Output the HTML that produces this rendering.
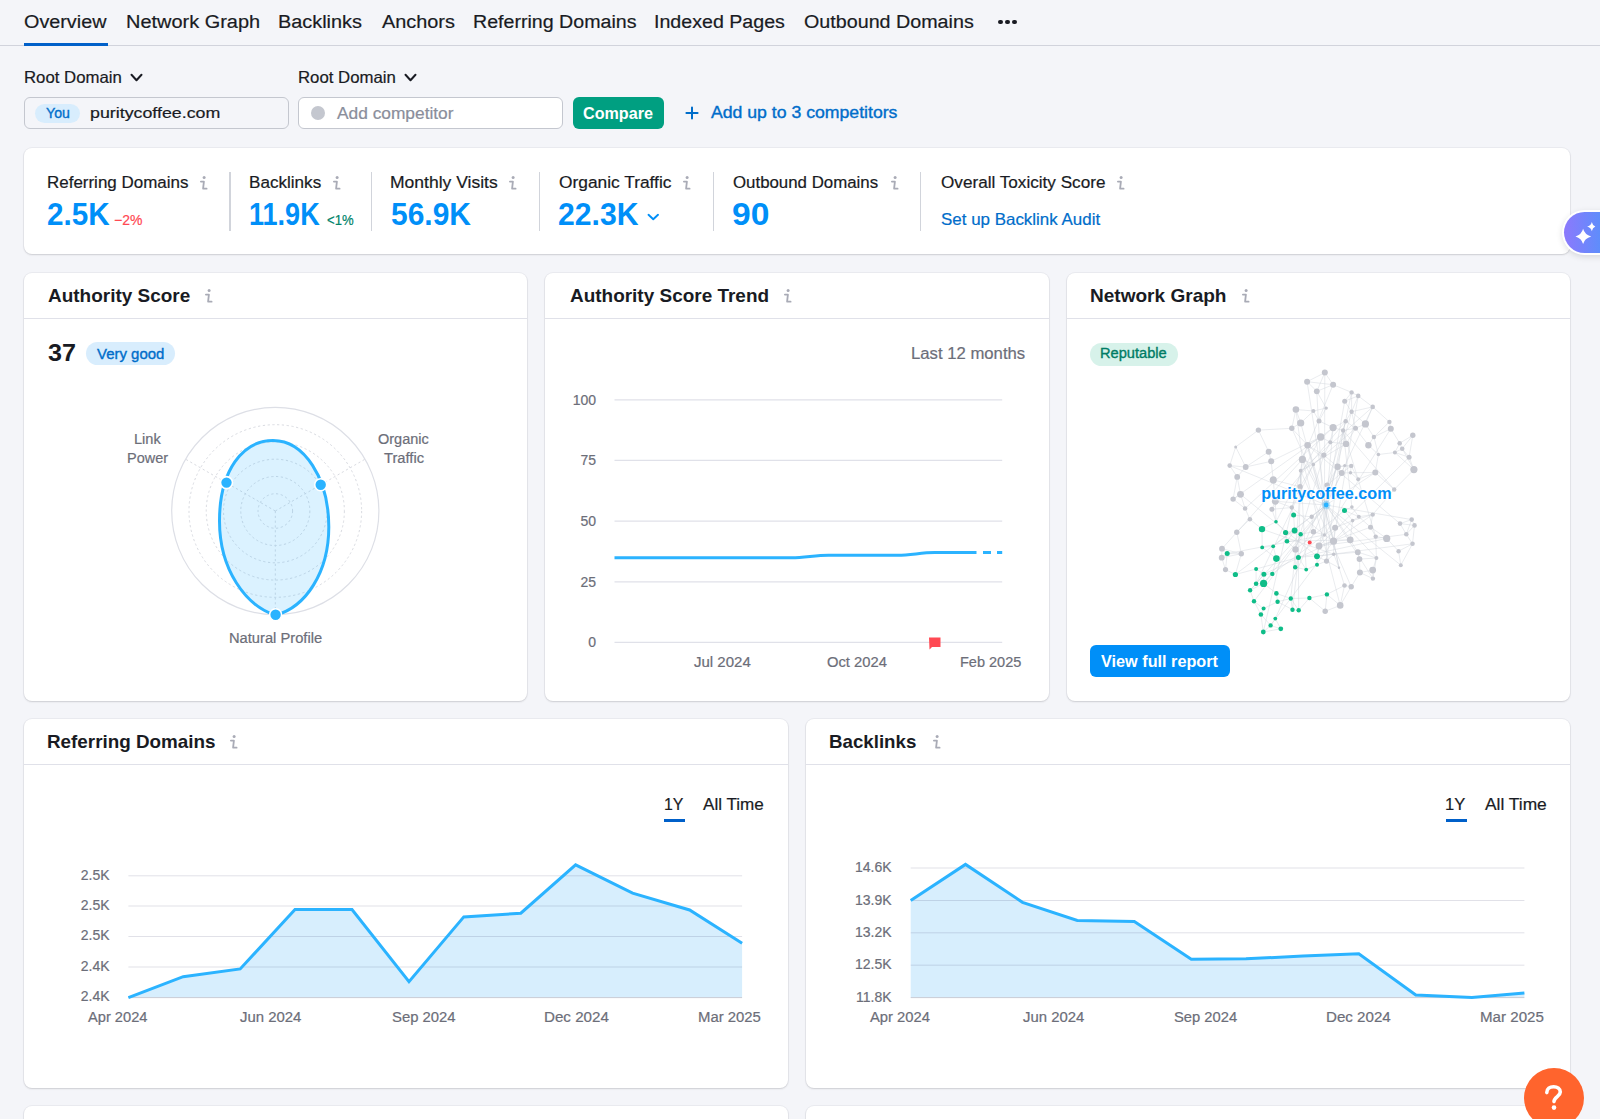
<!DOCTYPE html>
<html><head><meta charset="utf-8"><title>Backlink Analytics Overview</title>
<style>
html,body{margin:0;padding:0;}
body{width:1600px;height:1119px;overflow:hidden;background:#f4f5f9;position:relative;font-family:"Liberation Sans",sans-serif;}
.t{position:absolute;white-space:nowrap;}
.ln,.box,.ic,.card{position:absolute;}
.box{box-sizing:border-box;border-radius:6px;}
.card{background:#fff;border-radius:8px;box-shadow:0 0 0 1px rgba(25,27,35,.045),0 1px 2px rgba(25,27,35,.14);}
svg.full{position:absolute;left:0;top:0;width:1600px;height:1119px;overflow:visible;pointer-events:none;}
</style></head><body>
<div class="ln" style="left:0px;top:45px;width:1600px;height:1px;background:#d1d3dc"></div>
<div class="ln" style="left:24px;top:43px;width:84px;height:3px;background:#0060c9"></div>
<div class="ln" style="left:998.45px;top:19.6px;width:4.6px;height:4.6px;border-radius:2.3px;background:#191b23"></div>
<div class="ln" style="left:1005.325px;top:19.6px;width:4.6px;height:4.6px;border-radius:2.3px;background:#191b23"></div>
<div class="ln" style="left:1012.2px;top:19.6px;width:4.6px;height:4.6px;border-radius:2.3px;background:#191b23"></div>
<svg class="ic" style="left:129.5px;top:73px" width="13" height="9" viewBox="-1 -1 13 9"><path d="M0.5 0.8L5.5 6.2L10.5 0.8" fill="none" stroke="#191b23" stroke-width="2" stroke-linecap="round" stroke-linejoin="round"/></svg>
<svg class="ic" style="left:403.5px;top:73px" width="13" height="9" viewBox="-1 -1 13 9"><path d="M0.5 0.8L5.5 6.2L10.5 0.8" fill="none" stroke="#191b23" stroke-width="2" stroke-linecap="round" stroke-linejoin="round"/></svg>
<div class="box" style="left:24px;top:97px;width:265px;height:32px;background:#f4f5f9;border:1px solid #c4c7cf;"></div>
<div class="box" style="left:35px;top:104px;width:45px;height:19px;background:#d8edfd;border-radius:10px"></div>
<div class="box" style="left:298px;top:97px;width:265px;height:32px;background:#fff;border:1px solid #c4c7cf;"></div>
<div class="box" style="left:311px;top:106px;width:14px;height:14px;border-radius:7px;background:#c4c7cf"></div>
<div class="box" style="left:573px;top:97px;width:91px;height:32px;background:#009f81;border-radius:6px"></div>
<svg class="ic" style="left:684.6px;top:106.25px" width="14" height="14" viewBox="0 0 14 14"><path d="M7 1.4V12.6M1.4 7H12.6" stroke="#006dca" stroke-width="2" stroke-linecap="round"/></svg>
<div class="card" style="left:24px;top:148px;width:1546px;height:106px;"></div>
<div class="ln" style="left:229.4px;top:172px;width:1.2px;height:59px;background:#d1d4db"></div>
<div class="ln" style="left:371px;top:172px;width:1.2px;height:59px;background:#d1d4db"></div>
<div class="ln" style="left:538.7px;top:172px;width:1.2px;height:59px;background:#d1d4db"></div>
<div class="ln" style="left:712.6px;top:172px;width:1.2px;height:59px;background:#d1d4db"></div>
<div class="ln" style="left:920.1px;top:172px;width:1.2px;height:59px;background:#d1d4db"></div>
<svg class="ic" style="left:199.5px;top:175.8px" width="9" height="15" viewBox="0 0 9 15"><circle cx="4.1" cy="1.6" r="1.5" fill="#a9abb6"/><path d="M0.9 5.6H3.9L3.1 12.7H6.6" fill="none" stroke="#a9abb6" stroke-width="1.8" stroke-linecap="round" stroke-linejoin="round"/></svg>
<svg class="ic" style="left:332.6px;top:175.8px" width="9" height="15" viewBox="0 0 9 15"><circle cx="4.1" cy="1.6" r="1.5" fill="#a9abb6"/><path d="M0.9 5.6H3.9L3.1 12.7H6.6" fill="none" stroke="#a9abb6" stroke-width="1.8" stroke-linecap="round" stroke-linejoin="round"/></svg>
<svg class="ic" style="left:508.5px;top:175.8px" width="9" height="15" viewBox="0 0 9 15"><circle cx="4.1" cy="1.6" r="1.5" fill="#a9abb6"/><path d="M0.9 5.6H3.9L3.1 12.7H6.6" fill="none" stroke="#a9abb6" stroke-width="1.8" stroke-linecap="round" stroke-linejoin="round"/></svg>
<svg class="ic" style="left:683px;top:175.8px" width="9" height="15" viewBox="0 0 9 15"><circle cx="4.1" cy="1.6" r="1.5" fill="#a9abb6"/><path d="M0.9 5.6H3.9L3.1 12.7H6.6" fill="none" stroke="#a9abb6" stroke-width="1.8" stroke-linecap="round" stroke-linejoin="round"/></svg>
<svg class="ic" style="left:890.7px;top:175.8px" width="9" height="15" viewBox="0 0 9 15"><circle cx="4.1" cy="1.6" r="1.5" fill="#a9abb6"/><path d="M0.9 5.6H3.9L3.1 12.7H6.6" fill="none" stroke="#a9abb6" stroke-width="1.8" stroke-linecap="round" stroke-linejoin="round"/></svg>
<svg class="ic" style="left:1117px;top:175.8px" width="9" height="15" viewBox="0 0 9 15"><circle cx="4.1" cy="1.6" r="1.5" fill="#a9abb6"/><path d="M0.9 5.6H3.9L3.1 12.7H6.6" fill="none" stroke="#a9abb6" stroke-width="1.8" stroke-linecap="round" stroke-linejoin="round"/></svg>
<svg class="ic" style="left:646.6px;top:212.6px" width="12.5" height="8" viewBox="-1 -1 12.5 8"><path d="M0.5 0.8L5.25 5.2L10.0 0.8" fill="none" stroke="#008ff8" stroke-width="1.9" stroke-linecap="round" stroke-linejoin="round"/></svg>
<div class="card" style="left:24px;top:273px;width:503px;height:428px;"></div>
<div class="ln" style="left:24px;top:318px;width:503px;height:1px;background:#e0e1e9"></div>
<div class="card" style="left:545px;top:273px;width:504px;height:428px;"></div>
<div class="ln" style="left:545px;top:318px;width:504px;height:1px;background:#e0e1e9"></div>
<div class="card" style="left:1067px;top:273px;width:503px;height:428px;"></div>
<div class="ln" style="left:1067px;top:318px;width:503px;height:1px;background:#e0e1e9"></div>
<svg class="ic" style="left:205.4px;top:288.5px" width="9" height="15" viewBox="0 0 9 15"><circle cx="4.1" cy="1.6" r="1.5" fill="#a9abb6"/><path d="M0.9 5.6H3.9L3.1 12.7H6.6" fill="none" stroke="#a9abb6" stroke-width="1.8" stroke-linecap="round" stroke-linejoin="round"/></svg>
<svg class="ic" style="left:783.7px;top:288.5px" width="9" height="15" viewBox="0 0 9 15"><circle cx="4.1" cy="1.6" r="1.5" fill="#a9abb6"/><path d="M0.9 5.6H3.9L3.1 12.7H6.6" fill="none" stroke="#a9abb6" stroke-width="1.8" stroke-linecap="round" stroke-linejoin="round"/></svg>
<svg class="ic" style="left:1242px;top:288.5px" width="9" height="15" viewBox="0 0 9 15"><circle cx="4.1" cy="1.6" r="1.5" fill="#a9abb6"/><path d="M0.9 5.6H3.9L3.1 12.7H6.6" fill="none" stroke="#a9abb6" stroke-width="1.8" stroke-linecap="round" stroke-linejoin="round"/></svg>
<div class="box" style="left:86px;top:342px;width:88.5px;height:23px;background:#d8edfd;border-radius:12px"></div>
<div class="box" style="left:1090px;top:342.5px;width:88px;height:23px;background:#d7f2ea;border-radius:12px"></div>
<svg class="full"><circle cx="275.3" cy="511" r="103.6" fill="none" stroke="#dddfe6" stroke-width="1.2"/><circle cx="275.3" cy="511" r="17.27" fill="none" stroke="#d9dbe1" stroke-width="1" stroke-dasharray="2.2 2.6"/><circle cx="275.3" cy="511" r="34.53" fill="none" stroke="#d9dbe1" stroke-width="1" stroke-dasharray="2.2 2.6"/><circle cx="275.3" cy="511" r="51.80" fill="none" stroke="#d9dbe1" stroke-width="1" stroke-dasharray="2.2 2.6"/><circle cx="275.3" cy="511" r="69.07" fill="none" stroke="#d9dbe1" stroke-width="1" stroke-dasharray="2.2 2.6"/><circle cx="275.3" cy="511" r="86.33" fill="none" stroke="#d9dbe1" stroke-width="1" stroke-dasharray="2.2 2.6"/><line x1="275.3" y1="511" x2="275.30" y2="614.60" stroke="#d9dbe1" stroke-width="1" stroke-dasharray="2.2 2.6"/><line x1="275.3" y1="511" x2="185.58" y2="459.20" stroke="#d9dbe1" stroke-width="1" stroke-dasharray="2.2 2.6"/><line x1="275.3" y1="511" x2="365.02" y2="459.20" stroke="#d9dbe1" stroke-width="1" stroke-dasharray="2.2 2.6"/><path d="M275.6,615.2 C246,606 219.5,570 219.5,521 C219.5,470 243,440.5 273,440.5 C304,440.5 328.8,478 328.8,527 C328.8,572 306,607 275.6,615.2 Z" fill="#2bb3ff" fill-opacity="0.17" stroke="#2bb3ff" stroke-width="3"/><circle cx="226.5" cy="482.6" r="6" fill="#2bb3ff" stroke="#fff" stroke-width="1.6"/><circle cx="320.7" cy="484.8" r="6" fill="#2bb3ff" stroke="#fff" stroke-width="1.6"/><circle cx="275.6" cy="614.8" r="6" fill="#2bb3ff" stroke="#fff" stroke-width="1.6"/></svg>
<svg class="full"><line x1="614.5" x2="1002.2" y1="399.8" y2="399.8" stroke="#e0e1e9" stroke-width="1.2"/><line x1="614.5" x2="1002.2" y1="460.3" y2="460.3" stroke="#e0e1e9" stroke-width="1.2"/><line x1="614.5" x2="1002.2" y1="521.1" y2="521.1" stroke="#e0e1e9" stroke-width="1.2"/><line x1="614.5" x2="1002.2" y1="581.9" y2="581.9" stroke="#e0e1e9" stroke-width="1.2"/><line x1="614.5" x2="1002.2" y1="642.4" y2="642.4" stroke="#e0e1e9" stroke-width="1.2"/><path d="M614.5,557.8 L791.5,557.8 C805,557.8 815,555.2 828.5,555.2 L897.7,555.2 C911,555.2 921,552.6 934.7,552.6 L976.5,552.6" fill="none" stroke="#2bb3ff" stroke-width="3"/><path d="M983,552.6 L991,552.6 M997,552.6 L1002.2,552.6" fill="none" stroke="#2bb3ff" stroke-width="3"/><path d="M929,637.5 H940.5 V647 H932 L929.5,649.5 Z" fill="#ff4953"/></svg>
<svg class="full"><path d="M1350.5 472.7L1358.2 479.3M1352.6 520.6L1333.5 541.2M1320.7 437.0L1276.0 521.7M1313.4 411.0L1326.2 408.1M1229.7 465.6L1245.7 467.0M1229.7 465.6L1237.2 476.9M1344.5 585.5L1351.2 586.8M1254.0 601.3L1326.2 505.0M1373.9 437.0L1378.4 454.5M1277.6 601.7L1263.6 608.6M1258.4 430.1L1235.7 446.9M1276.0 521.7L1262.0 529.1M1295.5 549.4L1298.4 557.4M1325.2 611.3L1326.9 594.4M1409.1 457.2L1319.0 546.0M1295.9 409.5L1300.7 423.0M1350.5 472.7L1375.3 472.5M1365.4 423.9L1373.9 437.0M1295.9 409.5L1291.8 428.3M1333.7 554.2L1339.0 567.7M1249.9 519.2L1262.0 529.1M1386.7 538.4L1398.6 551.2M1280.8 628.8L1263.3 632.0M1254.0 601.3L1260.9 614.5M1273.2 546.3L1326.2 505.0M1406.3 534.3L1412.5 543.8M1300.7 423.0L1333.5 541.2M1345.7 421.2L1355.5 428.3M1337.6 466.8L1327.1 485.1M1295.5 549.4L1287.0 541.2M1262.0 529.1L1262.2 547.4M1324.4 535.0L1272.3 573.9M1375.3 472.5L1358.2 479.3M1236.8 532.2L1222.0 548.7M1256.1 569.0L1263.9 574.2M1414.5 525.4L1412.5 543.8M1390.8 428.7L1324.4 535.0M1225.5 569.6L1227.2 553.6M1300.7 470.7L1300.1 486.8M1313.4 531.7L1300.7 534.3M1372.7 514.6L1370.5 527.2M1324.4 535.0L1319.0 546.0M1276.4 593.4L1290.8 598.5M1302.4 459.4L1295.5 549.4M1291.8 428.3L1258.4 430.1M1237.2 476.9L1233.1 499.1M1302.4 459.4L1340.2 605.4M1358.2 395.9L1333.5 541.2M1326.9 594.4L1309.4 598.0M1412.5 543.8L1317.0 556.3M1375.3 472.5L1326.2 505.0M1323.8 455.1L1295.5 549.4M1316.8 391.3L1326.2 408.1M1337.6 466.8L1351.2 465.9M1345.7 421.2L1343.1 430.4M1295.5 549.4L1300.7 534.3M1351.9 507.1L1344.5 510.5M1250.1 590.3L1326.2 505.0M1351.6 411.7L1326.2 505.0M1344.7 401.2L1351.6 411.7M1271.9 509.3L1291.8 507.5M1350.2 539.8L1326.2 505.0M1256.1 569.0L1235.4 574.5M1323.8 455.1L1337.6 466.8M1333.1 384.7L1316.8 391.3M1307.6 445.2L1326.2 505.0M1229.7 465.6L1326.2 505.0M1225.5 569.6L1235.4 574.5M1298.4 557.4L1295.2 567.3M1333.1 427.6L1320.7 437.0M1240.5 494.3L1245.1 508.5M1268.7 451.7L1271.2 461.3M1249.9 519.2L1236.8 532.2M1241.3 553.8L1227.2 553.6M1237.2 476.9L1240.5 494.3M1351.2 586.8L1340.2 605.4M1275.3 501.3L1326.2 505.0M1351.6 411.7L1372.7 406.9M1340.2 605.4L1325.2 611.3M1319.0 546.0L1317.0 556.3M1337.6 466.8L1344.7 465.5M1291.8 428.3L1326.2 505.0M1409.1 457.2L1413.9 469.6M1292.5 609.7L1298.7 610.3M1250.1 590.3L1254.0 601.3M1341.7 473.0L1327.1 485.1M1302.4 459.4L1300.7 470.7M1324.4 535.0L1333.5 541.2M1294.6 530.5L1287.0 541.2M1302.4 459.4L1236.8 532.2M1372.7 406.9L1300.7 470.7M1323.8 455.1L1313.4 464.5M1319.0 420.9L1333.1 427.6M1293.6 515.1L1294.6 530.5M1298.4 557.4L1298.7 610.3M1275.3 618.6L1326.2 505.0M1241.3 553.8L1235.4 574.5M1355.5 428.3L1368.4 445.2M1375.7 536.6L1376.4 558.0M1313.4 531.7L1324.4 535.0M1346.1 443.9L1300.7 470.7M1263.9 574.2L1256.1 583.8M1351.2 465.9L1358.2 479.3M1320.7 437.0L1330.3 442.2M1272.3 573.9L1263.6 583.4M1285.6 532.5L1294.6 530.5M1358.8 516.7L1352.6 520.6M1359.9 572.5L1372.9 578.6M1290.8 598.5L1277.6 601.7M1300.7 470.7L1263.3 632.0M1294.6 530.5L1300.7 534.3M1352.6 520.6L1344.5 510.5M1402.2 448.7L1413.9 469.6M1398.6 551.2L1400.8 565.2M1307.6 445.2L1333.5 541.2M1376.4 558.0L1326.2 505.0M1378.4 454.5L1375.3 472.5M1235.4 574.5L1326.2 505.0M1394.2 489.5L1372.7 514.6M1358.2 395.9L1372.7 406.9M1240.5 494.3L1233.1 499.1M1313.4 411.0L1319.0 420.9M1402.2 448.7L1409.1 457.2M1355.5 428.3L1346.1 443.9M1330.3 442.2L1346.1 443.9M1412.5 543.8L1400.8 565.2M1351.6 392.4L1344.7 401.2M1333.5 541.2L1270.6 625.4M1245.1 508.5L1249.9 519.2M1262.2 547.4L1276.4 558.6M1263.9 574.2L1272.3 573.9M1291.8 507.5L1293.6 515.1M1351.9 507.1L1358.8 516.7M1345.7 421.2L1327.1 485.1M1358.2 395.9L1344.7 401.2M1359.9 572.5L1372.7 570.1M1400.0 523.6L1414.5 525.4M1245.7 467.0L1237.2 476.9M1351.6 392.4L1351.6 411.7M1344.7 465.5L1341.7 473.0M1273.2 479.9L1275.3 501.3M1258.4 430.1L1268.7 451.7M1276.4 558.6L1272.3 573.9M1351.2 465.9L1350.5 472.7M1271.2 461.3L1273.2 479.9M1260.9 614.5L1270.6 625.4M1339.0 567.7L1326.2 505.0M1399.7 443.2L1394.9 452.5M1295.9 409.5L1302.4 459.4M1350.2 539.8L1357.8 552.2M1313.4 411.0L1300.7 423.0M1290.8 598.5L1298.7 610.3M1343.1 430.4L1394.2 489.5M1341.7 473.0L1326.2 505.0M1307.6 445.2L1400.0 523.6M1386.7 538.4L1298.4 557.4M1351.6 392.4L1358.2 395.9M1273.2 479.9L1300.1 486.8M1222.0 548.7L1221.7 557.7M1295.5 549.4L1295.2 567.3M1365.4 423.9L1355.5 428.3M1351.6 392.4L1317.0 556.3M1275.3 501.3L1291.8 507.5M1333.7 554.2L1262.0 529.1M1317.0 564.8L1306.2 569.6M1370.5 527.2L1386.7 538.4M1324.4 535.0L1227.2 553.6M1290.8 598.5L1309.4 598.0M1324.8 372.6L1316.8 391.3M1307.6 445.2L1323.8 455.1M1333.5 541.2L1333.7 554.2M1302.4 459.4L1326.2 505.0M1373.9 437.0L1368.4 445.2M1344.7 465.5L1351.2 465.9M1414.5 525.4L1406.3 534.3M1372.7 406.9L1326.2 505.0M1343.1 430.4L1355.5 428.3M1333.7 554.2L1326.5 561.1M1333.1 427.6L1245.1 508.5M1263.6 583.4L1276.4 593.4M1333.5 541.2L1319.0 546.0M1375.3 472.5L1394.2 489.5M1372.7 406.9L1389.4 421.9M1376.4 558.0L1372.9 578.6M1291.8 507.5L1324.4 535.0M1394.9 452.5L1413.9 469.6M1313.4 464.5L1256.1 583.8M1345.7 421.2L1333.1 427.6M1339.0 567.7L1344.5 585.5M1335.1 527.7L1333.5 541.2M1320.7 437.0L1233.1 499.1M1222.0 548.7L1241.3 553.8M1325.2 611.3L1309.4 598.0M1221.7 557.7L1227.2 553.6M1268.7 451.7L1245.7 467.0M1275.3 501.3L1271.9 509.3M1276.4 593.4L1277.6 601.7M1358.8 516.7L1344.5 510.5M1333.5 541.2L1350.2 539.8M1324.8 372.6L1333.1 384.7M1307.6 445.2L1302.4 459.4M1351.6 411.7L1365.4 423.9M1271.9 509.3L1276.0 521.7M1394.9 452.5L1409.1 457.2M1333.1 384.7L1302.4 459.4M1256.1 583.8L1250.1 590.3M1295.5 549.4L1344.5 510.5M1372.7 514.6L1333.5 541.2M1235.7 446.9L1245.7 467.0M1233.1 499.1L1245.1 508.5M1291.8 428.3L1307.6 445.2M1256.1 569.0L1256.1 583.8M1254.0 601.3L1263.6 608.6M1351.6 411.7L1355.5 428.3M1300.1 486.8L1291.8 507.5M1368.4 445.2L1378.4 454.5M1340.2 605.4L1326.9 594.4M1276.0 521.7L1285.6 532.5M1333.1 427.6L1343.1 430.4M1270.6 625.4L1263.3 632.0M1240.5 494.3L1317.0 556.3M1351.6 411.7L1345.7 421.2M1359.5 559.1L1359.9 572.5M1311.7 516.8L1326.2 505.0M1298.4 557.4L1292.5 609.7M1326.5 561.1L1326.2 505.0M1317.0 556.3L1317.0 564.8M1235.7 446.9L1229.7 465.6M1313.4 464.5L1300.7 470.7M1343.1 430.4L1326.5 561.1M1327.1 485.1L1326.2 505.0M1236.8 532.2L1241.3 553.8M1359.5 559.1L1376.4 558.0M1320.7 437.0L1307.6 445.2M1389.4 421.9L1373.9 437.0M1344.7 401.2L1326.2 505.0M1298.4 557.4L1256.1 569.0M1221.7 557.7L1225.5 569.6M1358.8 516.7L1372.7 514.6M1326.2 408.1L1319.0 420.9M1270.6 625.4L1280.8 628.8M1343.1 430.4L1375.7 536.6M1372.7 570.1L1372.9 578.6M1273.2 546.3L1276.4 558.6M1311.7 516.8L1293.6 515.1M1324.8 372.6L1324.4 535.0M1411.7 519.6L1414.5 525.4M1389.4 421.9L1390.8 428.7M1337.6 466.8L1341.7 473.0M1358.2 395.9L1351.6 411.7M1358.8 516.7L1370.5 527.2M1333.1 427.6L1330.3 442.2M1275.3 618.6L1280.8 628.8M1357.8 552.2L1298.4 557.4M1330.3 442.2L1323.8 455.1M1412.8 435.3L1402.2 448.7M1333.1 384.7L1351.6 392.4M1333.1 427.6L1326.2 505.0M1309.4 598.0L1298.7 610.3M1320.7 437.0L1271.2 461.3M1326.5 561.1L1317.0 564.8M1298.4 557.4L1306.2 569.6M1222.0 548.7L1227.2 553.6M1263.6 583.4L1326.2 505.0M1350.2 539.8L1287.0 541.2M1400.0 523.6L1411.7 519.6M1400.0 523.6L1406.3 534.3M1313.4 464.5L1300.1 486.8M1412.5 543.8L1398.6 551.2M1263.6 608.6L1260.9 614.5M1390.8 428.7L1399.7 443.2M1307.1 381.7L1316.8 391.3M1351.2 465.9L1341.7 473.0M1326.5 561.1L1339.0 567.7M1411.7 519.6L1406.3 534.3M1285.6 532.5L1287.0 541.2M1300.7 470.7L1298.4 557.4M1341.7 473.0L1350.5 472.7M1316.8 391.3L1324.4 535.0M1359.9 572.5L1351.2 586.8M1275.3 618.6L1270.6 625.4M1290.8 598.5L1292.5 609.7M1400.8 565.2L1326.2 505.0M1402.2 448.7L1394.9 452.5M1343.1 430.4L1351.9 507.1M1375.7 536.6L1386.7 538.4M1307.1 381.7L1326.2 505.0M1412.8 435.3L1399.7 443.2M1262.2 547.4L1273.2 546.3M1412.8 435.3L1409.1 457.2M1326.5 561.1L1317.0 556.3M1399.7 443.2L1402.2 448.7M1352.6 520.6L1335.1 527.7M1300.7 470.7L1306.2 569.6M1241.3 553.8L1221.7 557.7M1337.6 466.8L1298.4 557.4M1370.5 527.2L1375.7 536.6M1413.9 469.6L1394.2 489.5M1357.8 552.2L1376.4 558.0M1275.3 501.3L1276.0 521.7M1372.9 578.6L1326.2 505.0M1295.2 567.3L1306.2 569.6M1355.5 428.3L1313.4 464.5M1333.5 541.2L1263.9 574.2M1390.8 428.7L1373.9 437.0M1300.7 423.0L1291.8 428.3M1307.1 381.7L1333.1 384.7M1263.9 574.2L1263.6 583.4M1271.2 461.3L1245.7 467.0M1285.6 532.5L1300.7 534.3M1302.4 459.4L1313.4 464.5M1352.6 520.6L1350.2 539.8M1263.6 583.4L1250.1 590.3M1370.5 527.2L1319.0 546.0M1372.7 406.9L1365.4 423.9M1344.5 585.5L1340.2 605.4M1376.4 558.0L1372.7 570.1M1344.5 585.5L1326.9 594.4M1277.6 601.7L1292.5 609.7M1335.1 527.7L1324.4 535.0M1300.7 470.7L1351.2 586.8M1260.9 614.5L1263.3 632.0M1345.7 421.2L1271.9 509.3M1411.7 519.6L1326.2 505.0M1343.1 430.4L1346.1 443.9M1357.8 552.2L1359.5 559.1M1324.8 372.6L1307.1 381.7M1333.5 541.2L1339.0 567.7M1311.7 516.8L1313.4 531.7M1394.9 452.5L1378.4 454.5M1406.3 534.3L1319.0 546.0M1256.1 583.8L1263.6 583.4M1372.7 514.6L1352.6 520.6M1295.9 409.5L1313.4 411.0M1295.5 549.4L1290.8 598.5" stroke="#cdd0d8" stroke-opacity="0.55" stroke-width="0.75" fill="none"/><circle cx="1324.8" cy="372.6" r="3.0" fill="#c4c6ce"/><circle cx="1307.1" cy="381.7" r="3.0" fill="#c4c6ce"/><circle cx="1333.1" cy="384.7" r="3.0" fill="#c4c6ce"/><circle cx="1316.8" cy="391.3" r="2.9" fill="#c4c6ce"/><circle cx="1351.6" cy="392.4" r="2.2" fill="#c4c6ce"/><circle cx="1358.2" cy="395.9" r="2.3" fill="#c4c6ce"/><circle cx="1344.7" cy="401.2" r="2.5" fill="#c4c6ce"/><circle cx="1295.9" cy="409.5" r="3.3" fill="#c4c6ce"/><circle cx="1313.4" cy="411.0" r="2.0" fill="#c4c6ce"/><circle cx="1326.2" cy="408.1" r="1.7" fill="#c4c6ce"/><circle cx="1351.6" cy="411.7" r="2.2" fill="#c4c6ce"/><circle cx="1372.7" cy="406.9" r="2.3" fill="#c4c6ce"/><circle cx="1300.7" cy="423.0" r="3.6" fill="#c4c6ce"/><circle cx="1319.0" cy="420.9" r="2.5" fill="#c4c6ce"/><circle cx="1345.7" cy="421.2" r="2.3" fill="#c4c6ce"/><circle cx="1365.4" cy="423.9" r="3.6" fill="#c4c6ce"/><circle cx="1389.4" cy="421.9" r="2.2" fill="#c4c6ce"/><circle cx="1333.1" cy="427.6" r="3.6" fill="#c4c6ce"/><circle cx="1343.1" cy="430.4" r="2.2" fill="#c4c6ce"/><circle cx="1355.5" cy="428.3" r="2.5" fill="#c4c6ce"/><circle cx="1390.8" cy="428.7" r="3.0" fill="#c4c6ce"/><circle cx="1291.8" cy="428.3" r="2.7" fill="#c4c6ce"/><circle cx="1258.4" cy="430.1" r="2.7" fill="#c4c6ce"/><circle cx="1412.8" cy="435.3" r="2.7" fill="#c4c6ce"/><circle cx="1320.7" cy="437.0" r="3.7" fill="#c4c6ce"/><circle cx="1373.9" cy="437.0" r="2.2" fill="#c4c6ce"/><circle cx="1399.7" cy="443.2" r="2.3" fill="#c4c6ce"/><circle cx="1402.2" cy="448.7" r="2.3" fill="#c4c6ce"/><circle cx="1235.7" cy="446.9" r="1.5" fill="#c4c6ce"/><circle cx="1307.6" cy="445.2" r="3.3" fill="#c4c6ce"/><circle cx="1330.3" cy="442.2" r="2.0" fill="#c4c6ce"/><circle cx="1346.1" cy="443.9" r="3.2" fill="#c4c6ce"/><circle cx="1368.4" cy="445.2" r="3.2" fill="#c4c6ce"/><circle cx="1394.9" cy="452.5" r="2.0" fill="#c4c6ce"/><circle cx="1378.4" cy="454.5" r="1.8" fill="#c4c6ce"/><circle cx="1409.1" cy="457.2" r="2.5" fill="#c4c6ce"/><circle cx="1268.7" cy="451.7" r="3.0" fill="#c4c6ce"/><circle cx="1271.2" cy="461.3" r="3.0" fill="#c4c6ce"/><circle cx="1302.4" cy="459.4" r="3.6" fill="#c4c6ce"/><circle cx="1323.8" cy="455.1" r="2.7" fill="#c4c6ce"/><circle cx="1229.7" cy="465.6" r="2.3" fill="#c4c6ce"/><circle cx="1245.7" cy="467.0" r="2.9" fill="#c4c6ce"/><circle cx="1313.4" cy="464.5" r="1.7" fill="#c4c6ce"/><circle cx="1337.6" cy="466.8" r="3.2" fill="#c4c6ce"/><circle cx="1344.7" cy="465.5" r="1.5" fill="#c4c6ce"/><circle cx="1351.2" cy="465.9" r="2.2" fill="#c4c6ce"/><circle cx="1341.7" cy="473.0" r="3.0" fill="#c4c6ce"/><circle cx="1350.5" cy="472.7" r="1.7" fill="#c4c6ce"/><circle cx="1375.3" cy="472.5" r="3.0" fill="#c4c6ce"/><circle cx="1413.9" cy="469.6" r="3.6" fill="#c4c6ce"/><circle cx="1237.2" cy="476.9" r="2.9" fill="#c4c6ce"/><circle cx="1300.7" cy="470.7" r="1.9" fill="#c4c6ce"/><circle cx="1273.2" cy="479.9" r="3.6" fill="#c4c6ce"/><circle cx="1358.2" cy="479.3" r="2.0" fill="#c4c6ce"/><circle cx="1300.1" cy="486.8" r="2.7" fill="#c4c6ce"/><circle cx="1327.1" cy="485.1" r="2.7" fill="#c4c6ce"/><circle cx="1394.2" cy="489.5" r="2.2" fill="#c4c6ce"/><circle cx="1240.5" cy="494.3" r="3.4" fill="#c4c6ce"/><circle cx="1233.1" cy="499.1" r="2.7" fill="#c4c6ce"/><circle cx="1275.3" cy="501.3" r="3.4" fill="#c4c6ce"/><circle cx="1245.1" cy="508.5" r="2.3" fill="#c4c6ce"/><circle cx="1271.9" cy="509.3" r="2.5" fill="#c4c6ce"/><circle cx="1291.8" cy="507.5" r="2.2" fill="#c4c6ce"/><circle cx="1311.7" cy="516.8" r="2.2" fill="#c4c6ce"/><circle cx="1351.9" cy="507.1" r="1.8" fill="#c4c6ce"/><circle cx="1358.8" cy="516.7" r="2.0" fill="#c4c6ce"/><circle cx="1372.7" cy="514.6" r="2.2" fill="#c4c6ce"/><circle cx="1352.6" cy="520.6" r="1.8" fill="#c4c6ce"/><circle cx="1249.9" cy="519.2" r="2.3" fill="#c4c6ce"/><circle cx="1236.8" cy="532.2" r="2.7" fill="#c4c6ce"/><circle cx="1370.5" cy="527.2" r="2.5" fill="#c4c6ce"/><circle cx="1400.0" cy="523.6" r="2.3" fill="#c4c6ce"/><circle cx="1411.7" cy="519.6" r="2.3" fill="#c4c6ce"/><circle cx="1414.5" cy="525.4" r="2.3" fill="#c4c6ce"/><circle cx="1335.1" cy="527.7" r="3.0" fill="#c4c6ce"/><circle cx="1313.4" cy="531.7" r="2.7" fill="#c4c6ce"/><circle cx="1324.4" cy="535.0" r="1.7" fill="#c4c6ce"/><circle cx="1333.5" cy="541.2" r="3.6" fill="#c4c6ce"/><circle cx="1350.2" cy="539.8" r="3.4" fill="#c4c6ce"/><circle cx="1375.7" cy="536.6" r="2.2" fill="#c4c6ce"/><circle cx="1386.7" cy="538.4" r="3.6" fill="#c4c6ce"/><circle cx="1406.3" cy="534.3" r="2.3" fill="#c4c6ce"/><circle cx="1412.5" cy="543.8" r="2.3" fill="#c4c6ce"/><circle cx="1319.0" cy="546.0" r="3.4" fill="#c4c6ce"/><circle cx="1295.5" cy="549.4" r="3.2" fill="#c4c6ce"/><circle cx="1222.0" cy="548.7" r="2.9" fill="#c4c6ce"/><circle cx="1241.3" cy="553.8" r="2.7" fill="#c4c6ce"/><circle cx="1221.7" cy="557.7" r="2.9" fill="#c4c6ce"/><circle cx="1333.7" cy="554.2" r="1.8" fill="#c4c6ce"/><circle cx="1357.8" cy="552.2" r="2.9" fill="#c4c6ce"/><circle cx="1398.6" cy="551.2" r="2.2" fill="#c4c6ce"/><circle cx="1359.5" cy="559.1" r="2.9" fill="#c4c6ce"/><circle cx="1376.4" cy="558.0" r="2.0" fill="#c4c6ce"/><circle cx="1326.5" cy="561.1" r="2.6" fill="#c4c6ce"/><circle cx="1225.5" cy="569.6" r="2.6" fill="#c4c6ce"/><circle cx="1339.0" cy="567.7" r="1.2" fill="#c4c6ce"/><circle cx="1400.8" cy="565.2" r="2.0" fill="#c4c6ce"/><circle cx="1359.9" cy="572.5" r="3.0" fill="#c4c6ce"/><circle cx="1372.7" cy="570.1" r="3.4" fill="#c4c6ce"/><circle cx="1372.9" cy="578.6" r="2.2" fill="#c4c6ce"/><circle cx="1344.5" cy="585.5" r="2.3" fill="#c4c6ce"/><circle cx="1351.2" cy="586.8" r="2.7" fill="#c4c6ce"/><circle cx="1340.2" cy="605.4" r="3.3" fill="#c4c6ce"/><circle cx="1325.2" cy="611.3" r="2.7" fill="#c4c6ce"/><circle cx="1344.5" cy="510.5" r="2.5" fill="#0fbd88"/><circle cx="1293.6" cy="515.1" r="2.5" fill="#0fbd88"/><circle cx="1276.0" cy="521.7" r="1.8" fill="#0fbd88"/><circle cx="1262.0" cy="529.1" r="3.2" fill="#0fbd88"/><circle cx="1285.6" cy="532.5" r="2.6" fill="#0fbd88"/><circle cx="1294.6" cy="530.5" r="2.9" fill="#0fbd88"/><circle cx="1300.7" cy="534.3" r="2.2" fill="#0fbd88"/><circle cx="1287.0" cy="541.2" r="2.3" fill="#0fbd88"/><circle cx="1262.2" cy="547.4" r="1.9" fill="#0fbd88"/><circle cx="1273.2" cy="546.3" r="1.9" fill="#0fbd88"/><circle cx="1227.2" cy="553.6" r="2.5" fill="#0fbd88"/><circle cx="1276.4" cy="558.6" r="3.3" fill="#0fbd88"/><circle cx="1298.4" cy="557.4" r="2.5" fill="#0fbd88"/><circle cx="1317.0" cy="556.3" r="2.9" fill="#0fbd88"/><circle cx="1317.0" cy="564.8" r="2.0" fill="#0fbd88"/><circle cx="1295.2" cy="567.3" r="2.2" fill="#0fbd88"/><circle cx="1306.2" cy="569.6" r="1.9" fill="#0fbd88"/><circle cx="1256.1" cy="569.0" r="2.0" fill="#0fbd88"/><circle cx="1235.4" cy="574.5" r="2.6" fill="#0fbd88"/><circle cx="1263.9" cy="574.2" r="2.5" fill="#0fbd88"/><circle cx="1272.3" cy="573.9" r="2.2" fill="#0fbd88"/><circle cx="1256.1" cy="583.8" r="2.3" fill="#0fbd88"/><circle cx="1263.6" cy="583.4" r="3.6" fill="#0fbd88"/><circle cx="1250.1" cy="590.3" r="2.2" fill="#0fbd88"/><circle cx="1276.4" cy="593.4" r="2.3" fill="#0fbd88"/><circle cx="1326.9" cy="594.4" r="2.2" fill="#0fbd88"/><circle cx="1290.8" cy="598.5" r="2.2" fill="#0fbd88"/><circle cx="1309.4" cy="598.0" r="2.2" fill="#0fbd88"/><circle cx="1254.0" cy="601.3" r="2.2" fill="#0fbd88"/><circle cx="1277.6" cy="601.7" r="2.2" fill="#0fbd88"/><circle cx="1263.6" cy="608.6" r="2.0" fill="#0fbd88"/><circle cx="1292.5" cy="609.7" r="2.2" fill="#0fbd88"/><circle cx="1298.7" cy="610.3" r="2.2" fill="#0fbd88"/><circle cx="1260.9" cy="614.5" r="2.3" fill="#0fbd88"/><circle cx="1275.3" cy="618.6" r="1.9" fill="#0fbd88"/><circle cx="1270.6" cy="625.4" r="2.2" fill="#0fbd88"/><circle cx="1280.8" cy="628.8" r="2.4" fill="#0fbd88"/><circle cx="1263.3" cy="632.0" r="2.4" fill="#0fbd88"/><circle cx="1309.7" cy="542.6" r="2" fill="#ff4953"/><circle cx="1326.2" cy="505" r="4.2" fill="#2bb3ff" fill-opacity="0.3"/><circle cx="1326.2" cy="505" r="2.4" fill="#2bb3ff"/><text x="1326.4" y="499.2" text-anchor="middle" font-family="Liberation Sans" font-weight="700" font-size="16.2" fill="#008ff8" stroke="#fff" stroke-width="2.5" stroke-opacity="0.6" paint-order="stroke">puritycoffee.com</text></svg>
<div class="box" style="left:1090px;top:645.3px;width:139.5px;height:32px;background:#008ff8;border-radius:6px"></div>
<div class="card" style="left:24px;top:719px;width:764px;height:369px;"></div>
<div class="ln" style="left:24px;top:764px;width:764px;height:1px;background:#e0e1e9"></div>
<div class="card" style="left:806px;top:719px;width:764px;height:369px;"></div>
<div class="ln" style="left:806px;top:764px;width:764px;height:1px;background:#e0e1e9"></div>
<svg class="ic" style="left:229.7px;top:735px" width="9" height="15" viewBox="0 0 9 15"><circle cx="4.1" cy="1.6" r="1.5" fill="#a9abb6"/><path d="M0.9 5.6H3.9L3.1 12.7H6.6" fill="none" stroke="#a9abb6" stroke-width="1.8" stroke-linecap="round" stroke-linejoin="round"/></svg>
<svg class="ic" style="left:932.5px;top:735px" width="9" height="15" viewBox="0 0 9 15"><circle cx="4.1" cy="1.6" r="1.5" fill="#a9abb6"/><path d="M0.9 5.6H3.9L3.1 12.7H6.6" fill="none" stroke="#a9abb6" stroke-width="1.8" stroke-linecap="round" stroke-linejoin="round"/></svg>
<div class="ln" style="left:663.5px;top:819px;width:21px;height:3px;background:#0060c9"></div>
<div class="ln" style="left:1445.5px;top:819px;width:21px;height:3px;background:#0060c9"></div>
<svg class="full"><polygon points="128.4,997.6 128.4,997.6 183.2,976.7 240.2,968.9 295.0,909.6 352.0,909.6 409.0,981.7 463.8,916.9 520.8,913.2 575.6,864.9 632.6,893.2 689.6,910.0 742.1,943.3 742.1,997.6" fill="#d7eefd"/><line x1="128.4" x2="742.1" y1="875.8" y2="875.8" stroke="rgb(40,45,90)" stroke-opacity="0.14" stroke-width="1"/><line x1="128.4" x2="742.1" y1="906" y2="906" stroke="rgb(40,45,90)" stroke-opacity="0.14" stroke-width="1"/><line x1="128.4" x2="742.1" y1="936.5" y2="936.5" stroke="rgb(40,45,90)" stroke-opacity="0.14" stroke-width="1"/><line x1="128.4" x2="742.1" y1="967" y2="967" stroke="rgb(40,45,90)" stroke-opacity="0.14" stroke-width="1"/><line x1="128.4" x2="742.1" y1="997.6" y2="997.6" stroke="#c9ccd6" stroke-width="1"/><polyline points="128.4,997.6 183.2,976.7 240.2,968.9 295.0,909.6 352.0,909.6 409.0,981.7 463.8,916.9 520.8,913.2 575.6,864.9 632.6,893.2 689.6,910.0 742.1,943.3" fill="none" stroke="#2bb3ff" stroke-width="3" stroke-linejoin="miter" stroke-miterlimit="4"/><polygon points="910.7,997.6 910.7,900.5 965.5,864.4 1022.5,902.3 1077.3,920.5 1134.3,921.4 1191.3,959.3 1246.0,958.8 1303.0,956.1 1358.8,953.8 1415.8,994.9 1471.9,997.6 1524.4,993.1 1524.4,997.6" fill="#d7eefd"/><line x1="910.7" x2="1524.4" y1="868" y2="868" stroke="rgb(40,45,90)" stroke-opacity="0.14" stroke-width="1"/><line x1="910.7" x2="1524.4" y1="900.5" y2="900.5" stroke="rgb(40,45,90)" stroke-opacity="0.14" stroke-width="1"/><line x1="910.7" x2="1524.4" y1="932.8" y2="932.8" stroke="rgb(40,45,90)" stroke-opacity="0.14" stroke-width="1"/><line x1="910.7" x2="1524.4" y1="965.2" y2="965.2" stroke="rgb(40,45,90)" stroke-opacity="0.14" stroke-width="1"/><line x1="910.7" x2="1524.4" y1="997.6" y2="997.6" stroke="#c9ccd6" stroke-width="1"/><polyline points="910.7,900.5 965.5,864.4 1022.5,902.3 1077.3,920.5 1134.3,921.4 1191.3,959.3 1246.0,958.8 1303.0,956.1 1358.8,953.8 1415.8,994.9 1471.9,997.6 1524.4,993.1" fill="none" stroke="#2bb3ff" stroke-width="3" stroke-linejoin="miter" stroke-miterlimit="4"/></svg>
<div class="card" style="left:24px;top:1106.3px;width:764px;height:93.70000000000005px;"></div>
<div class="card" style="left:806px;top:1106.3px;width:764px;height:93.70000000000005px;"></div>
<div class="box" style="left:1562px;top:210px;width:80px;height:45px;border-radius:23px;background:#fff;box-shadow:0 2px 6px rgba(0,0,0,.12)"></div>
<div class="box" style="left:1564px;top:212px;width:80px;height:41px;border-radius:21px;background:linear-gradient(90deg,#8c79fc 0px,#5a8ffb 40px)"></div>
<svg class="ic" style="left:1570px;top:218px" width="30" height="30" viewBox="0 0 30 30"><path d="M13.1,10.8 Q14.6,16.6 21.2,18.5 Q14.6,20.4 13.1,26 Q11.6,20.4 5.5,18.5 Q11.6,16.6 13.1,10.8Z" fill="#fff"/><path d="M21.8,3.9 Q22.6,7.5 25.3,8.6 Q22.6,9.7 21.8,13.3 Q21,9.7 17.1,8.6 Q21,7.5 21.8,3.9Z" fill="#fff"/></svg>
<div class="box" style="left:1523.75px;top:1067.5px;width:60px;height:60px;border-radius:30px;background:#ff642d"></div>
<svg class="ic" style="left:1540px;top:1080px" width="28" height="34" viewBox="0 0 28 34"><path d="M6.8,12.6 C6.8,8.5 9.8,6.8 13.6,6.8 C17.4,6.8 20.3,8.9 20.3,12.1 C20.3,16.4 14,16.8 14,21.6" fill="none" stroke="#fff" stroke-width="3.6" stroke-linecap="round"/><circle cx="14" cy="27.6" r="2.3" fill="#fff"/></svg>
<div class="t" style="left:24.40px;top:13.38px;font-size:18.8px;line-height:18.8px;font-weight:400;-webkit-text-stroke:0.2px currentColor;color:#191b23;transform:scaleX(1.0533);transform-origin:0 0;">Overview</div>
<div class="t" style="left:126.04px;top:13.38px;font-size:18.8px;line-height:18.8px;font-weight:400;-webkit-text-stroke:0.2px currentColor;color:#191b23;transform:scaleX(1.0621);transform-origin:0 0;">Network Graph</div>
<div class="t" style="left:278.44px;top:13.38px;font-size:18.8px;line-height:18.8px;font-weight:400;-webkit-text-stroke:0.2px currentColor;color:#191b23;transform:scaleX(1.0586);transform-origin:0 0;">Backlinks</div>
<div class="t" style="left:382.00px;top:13.38px;font-size:18.8px;line-height:18.8px;font-weight:400;-webkit-text-stroke:0.2px currentColor;color:#191b23;transform:scaleX(1.0583);transform-origin:0 0;">Anchors</div>
<div class="t" style="left:473.21px;top:13.38px;font-size:18.8px;line-height:18.8px;font-weight:400;-webkit-text-stroke:0.2px currentColor;color:#191b23;transform:scaleX(1.0440);transform-origin:0 0;">Referring Domains</div>
<div class="t" style="left:653.96px;top:13.38px;font-size:18.8px;line-height:18.8px;font-weight:400;-webkit-text-stroke:0.2px currentColor;color:#191b23;transform:scaleX(1.0443);transform-origin:0 0;">Indexed Pages</div>
<div class="t" style="left:803.75px;top:13.38px;font-size:18.8px;line-height:18.8px;font-weight:400;-webkit-text-stroke:0.2px currentColor;color:#191b23;transform:scaleX(1.0490);transform-origin:0 0;">Outbound Domains</div>
<div class="t" style="left:23.98px;top:68.93px;font-size:16.5px;line-height:16.5px;font-weight:400;-webkit-text-stroke:0.2px currentColor;color:#191b23;transform:scaleX(1.0156);transform-origin:0 0;">Root Domain</div>
<div class="t" style="left:298.23px;top:68.93px;font-size:16.5px;line-height:16.5px;font-weight:400;-webkit-text-stroke:0.2px currentColor;color:#191b23;transform:scaleX(1.0156);transform-origin:0 0;">Root Domain</div>
<div class="t" style="left:46.00px;top:106.34px;font-size:14.6px;line-height:14.6px;font-weight:400;-webkit-text-stroke:0.35px currentColor;color:#006dca;transform:scaleX(0.9690);transform-origin:0 0;">You</div>
<div class="t" style="left:90.25px;top:105.24px;font-size:15.3px;line-height:15.3px;font-weight:400;-webkit-text-stroke:0.2px currentColor;color:#191b23;transform:scaleX(1.1645);transform-origin:0 0;">puritycoffee.com</div>
<div class="t" style="left:337.00px;top:105.95px;font-size:16px;line-height:16px;font-weight:400;-webkit-text-stroke:0.2px currentColor;color:#8a8e9b;transform:scaleX(1.0828);transform-origin:0 0;">Add competitor</div>
<div class="t" style="left:583.00px;top:105.85px;font-size:16px;line-height:16px;font-weight:600;color:#ffffff;transform:scaleX(1.0079);transform-origin:0 0;">Compare</div>
<div class="t" style="left:710.80px;top:105.35px;font-size:16px;line-height:16px;font-weight:400;-webkit-text-stroke:0.35px currentColor;color:#006dca;transform:scaleX(1.1031);transform-origin:0 0;">Add up to 3 competitors</div>
<div class="t" style="left:47.06px;top:174.00px;font-size:16.3px;line-height:16.3px;font-weight:400;-webkit-text-stroke:0.2px currentColor;color:#191b23;transform:scaleX(1.0417);transform-origin:0 0;">Referring Domains</div>
<div class="t" style="left:249.15px;top:174.00px;font-size:16.3px;line-height:16.3px;font-weight:400;-webkit-text-stroke:0.2px currentColor;color:#191b23;transform:scaleX(1.0499);transform-origin:0 0;">Backlinks</div>
<div class="t" style="left:390.33px;top:174.00px;font-size:16.3px;line-height:16.3px;font-weight:400;-webkit-text-stroke:0.2px currentColor;color:#191b23;transform:scaleX(1.0748);transform-origin:0 0;">Monthly Visits</div>
<div class="t" style="left:559.00px;top:174.00px;font-size:16.3px;line-height:16.3px;font-weight:400;-webkit-text-stroke:0.2px currentColor;color:#191b23;transform:scaleX(1.0651);transform-origin:0 0;">Organic Traffic</div>
<div class="t" style="left:733.40px;top:174.00px;font-size:16.3px;line-height:16.3px;font-weight:400;-webkit-text-stroke:0.2px currentColor;color:#191b23;transform:scaleX(1.0340);transform-origin:0 0;">Outbound Domains</div>
<div class="t" style="left:940.50px;top:174.00px;font-size:16.3px;line-height:16.3px;font-weight:400;-webkit-text-stroke:0.2px currentColor;color:#191b23;transform:scaleX(1.0526);transform-origin:0 0;">Overall Toxicity Score</div>
<div class="t" style="left:47.28px;top:199.27px;font-size:30.5px;line-height:30.5px;font-weight:700;color:#008ff8;transform:scaleX(0.9724);transform-origin:0 0;">2.5K</div>
<div class="t" style="left:249.31px;top:199.27px;font-size:30.5px;line-height:30.5px;font-weight:700;color:#008ff8;transform:scaleX(0.8871);transform-origin:0 0;">11.9K</div>
<div class="t" style="left:391.40px;top:199.27px;font-size:30.5px;line-height:30.5px;font-weight:700;color:#008ff8;transform:scaleX(0.9820);transform-origin:0 0;">56.9K</div>
<div class="t" style="left:558.01px;top:199.27px;font-size:30.5px;line-height:30.5px;font-weight:700;color:#008ff8;transform:scaleX(0.9880);transform-origin:0 0;">22.3K</div>
<div class="t" style="left:732.30px;top:199.27px;font-size:30.5px;line-height:30.5px;font-weight:700;color:#008ff8;transform:scaleX(1.1013);transform-origin:0 0;">90</div>
<div class="t" style="left:114.30px;top:213.14px;font-size:14px;line-height:14px;font-weight:400;-webkit-text-stroke:0.2px currentColor;color:#ff4953;transform:scaleX(0.9978);transform-origin:0 0;">−2%</div>
<div class="t" style="left:326.70px;top:213.14px;font-size:14px;line-height:14px;font-weight:400;-webkit-text-stroke:0.2px currentColor;color:#00836a;transform:scaleX(0.9370);transform-origin:0 0;">&lt;1%</div>
<div class="t" style="left:940.50px;top:211.23px;font-size:16.5px;line-height:16.5px;font-weight:400;-webkit-text-stroke:0.2px currentColor;color:#006dca;transform:scaleX(1.0266);transform-origin:0 0;">Set up Backlink Audit</div>
<div class="t" style="left:48.00px;top:286.52px;font-size:18.4px;line-height:18.4px;font-weight:700;color:#191b23;transform:scaleX(1.0311);transform-origin:0 0;">Authority Score</div>
<div class="t" style="left:569.80px;top:286.52px;font-size:18.4px;line-height:18.4px;font-weight:700;color:#191b23;transform:scaleX(1.0306);transform-origin:0 0;">Authority Score Trend</div>
<div class="t" style="left:1089.76px;top:286.52px;font-size:18.4px;line-height:18.4px;font-weight:700;color:#191b23;transform:scaleX(1.0353);transform-origin:0 0;">Network Graph</div>
<div class="t" style="left:46.79px;top:732.95px;font-size:18.6px;line-height:18.6px;font-weight:700;color:#191b23;transform:scaleX(1.0133);transform-origin:0 0;">Referring Domains</div>
<div class="t" style="left:828.99px;top:732.95px;font-size:18.6px;line-height:18.6px;font-weight:700;color:#191b23;transform:scaleX(1.0061);transform-origin:0 0;">Backlinks</div>
<div class="t" style="left:48.40px;top:341.82px;font-size:23px;line-height:23px;font-weight:700;color:#191b23;transform:scaleX(1.0931);transform-origin:0 0;">37</div>
<div class="t" style="left:97.00px;top:346.64px;font-size:14px;line-height:14px;font-weight:400;-webkit-text-stroke:0.35px currentColor;color:#006dca;transform:scaleX(1.0681);transform-origin:0 0;">Very good</div>
<div class="t" style="left:1100.45px;top:346.44px;font-size:14px;line-height:14px;font-weight:400;-webkit-text-stroke:0.35px currentColor;color:#007c65;transform:scaleX(1.0454);transform-origin:0 0;">Reputable</div>
<div class="t" style="left:133.66px;top:432.34px;font-size:14px;line-height:14px;font-weight:400;-webkit-text-stroke:0.2px currentColor;color:#6c6e79;transform:scaleX(1.0435);transform-origin:0 0;">Link</div>
<div class="t" style="left:126.57px;top:450.64px;font-size:14px;line-height:14px;font-weight:400;-webkit-text-stroke:0.2px currentColor;color:#6c6e79;transform:scaleX(1.0328);transform-origin:0 0;">Power</div>
<div class="t" style="left:378.20px;top:432.34px;font-size:14px;line-height:14px;font-weight:400;-webkit-text-stroke:0.2px currentColor;color:#6c6e79;transform:scaleX(1.0363);transform-origin:0 0;">Organic</div>
<div class="t" style="left:384.20px;top:450.64px;font-size:14px;line-height:14px;font-weight:400;-webkit-text-stroke:0.2px currentColor;color:#6c6e79;transform:scaleX(1.0520);transform-origin:0 0;">Traffic</div>
<div class="t" style="left:228.65px;top:631.24px;font-size:14px;line-height:14px;font-weight:400;-webkit-text-stroke:0.2px currentColor;color:#6c6e79;transform:scaleX(1.0499);transform-origin:0 0;">Natural Profile</div>
<div class="t" style="left:910.76px;top:346.05px;font-size:16px;line-height:16px;font-weight:400;-webkit-text-stroke:0.2px currentColor;color:#6c6e79;transform:scaleX(1.0434);transform-origin:0 0;">Last 12 months</div>
<div class="t" style="left:572.63px;top:392.84px;font-size:14px;line-height:14px;font-weight:400;-webkit-text-stroke:0.2px currentColor;color:#6c6e79;">100</div>
<div class="t" style="left:580.41px;top:453.34px;font-size:14px;line-height:14px;font-weight:400;-webkit-text-stroke:0.2px currentColor;color:#6c6e79;">75</div>
<div class="t" style="left:580.41px;top:514.14px;font-size:14px;line-height:14px;font-weight:400;-webkit-text-stroke:0.2px currentColor;color:#6c6e79;">50</div>
<div class="t" style="left:580.41px;top:574.94px;font-size:14px;line-height:14px;font-weight:400;-webkit-text-stroke:0.2px currentColor;color:#6c6e79;">25</div>
<div class="t" style="left:588.20px;top:635.44px;font-size:14px;line-height:14px;font-weight:400;-webkit-text-stroke:0.2px currentColor;color:#6c6e79;">0</div>
<div class="t" style="left:694.30px;top:655.34px;font-size:14px;line-height:14px;font-weight:400;-webkit-text-stroke:0.2px currentColor;color:#6c6e79;transform:scaleX(1.0725);transform-origin:0 0;">Jul 2024</div>
<div class="t" style="left:826.90px;top:655.34px;font-size:14px;line-height:14px;font-weight:400;-webkit-text-stroke:0.2px currentColor;color:#6c6e79;transform:scaleX(1.0539);transform-origin:0 0;">Oct 2024</div>
<div class="t" style="left:959.96px;top:655.34px;font-size:14px;line-height:14px;font-weight:400;-webkit-text-stroke:0.2px currentColor;color:#6c6e79;transform:scaleX(1.0365);transform-origin:0 0;">Feb 2025</div>
<div class="t" style="left:80.74px;top:867.64px;font-size:14px;line-height:14px;font-weight:400;-webkit-text-stroke:0.2px currentColor;color:#6c6e79;">2.5K</div>
<div class="t" style="left:80.74px;top:897.84px;font-size:14px;line-height:14px;font-weight:400;-webkit-text-stroke:0.2px currentColor;color:#6c6e79;">2.5K</div>
<div class="t" style="left:80.74px;top:928.34px;font-size:14px;line-height:14px;font-weight:400;-webkit-text-stroke:0.2px currentColor;color:#6c6e79;">2.5K</div>
<div class="t" style="left:80.74px;top:958.84px;font-size:14px;line-height:14px;font-weight:400;-webkit-text-stroke:0.2px currentColor;color:#6c6e79;">2.4K</div>
<div class="t" style="left:80.74px;top:989.44px;font-size:14px;line-height:14px;font-weight:400;-webkit-text-stroke:0.2px currentColor;color:#6c6e79;">2.4K</div>
<div class="t" style="left:88.30px;top:1010.14px;font-size:14px;line-height:14px;font-weight:400;-webkit-text-stroke:0.2px currentColor;color:#6c6e79;transform:scaleX(1.0467);transform-origin:0 0;">Apr 2024</div>
<div class="t" style="left:240.20px;top:1010.14px;font-size:14px;line-height:14px;font-weight:400;-webkit-text-stroke:0.2px currentColor;color:#6c6e79;transform:scaleX(1.0654);transform-origin:0 0;">Jun 2024</div>
<div class="t" style="left:392.20px;top:1010.14px;font-size:14px;line-height:14px;font-weight:400;-webkit-text-stroke:0.2px currentColor;color:#6c6e79;transform:scaleX(1.0605);transform-origin:0 0;">Sep 2024</div>
<div class="t" style="left:543.92px;top:1010.14px;font-size:14px;line-height:14px;font-weight:400;-webkit-text-stroke:0.2px currentColor;color:#6c6e79;transform:scaleX(1.0821);transform-origin:0 0;">Dec 2024</div>
<div class="t" style="left:697.94px;top:1010.14px;font-size:14px;line-height:14px;font-weight:400;-webkit-text-stroke:0.2px currentColor;color:#6c6e79;transform:scaleX(1.0624);transform-origin:0 0;">Mar 2025</div>
<div class="t" style="left:664.06px;top:796.00px;font-size:17px;line-height:17px;font-weight:400;-webkit-text-stroke:0.2px currentColor;color:#191b23;transform:scaleX(0.9355);transform-origin:0 0;">1Y</div>
<div class="t" style="left:703.40px;top:796.00px;font-size:17px;line-height:17px;font-weight:400;-webkit-text-stroke:0.2px currentColor;color:#191b23;transform:scaleX(1.0049);transform-origin:0 0;">All Time</div>
<div class="t" style="left:855.05px;top:860.14px;font-size:14px;line-height:14px;font-weight:400;-webkit-text-stroke:0.2px currentColor;color:#6c6e79;">14.6K</div>
<div class="t" style="left:855.05px;top:892.64px;font-size:14px;line-height:14px;font-weight:400;-webkit-text-stroke:0.2px currentColor;color:#6c6e79;">13.9K</div>
<div class="t" style="left:855.05px;top:924.94px;font-size:14px;line-height:14px;font-weight:400;-webkit-text-stroke:0.2px currentColor;color:#6c6e79;">13.2K</div>
<div class="t" style="left:855.05px;top:957.34px;font-size:14px;line-height:14px;font-weight:400;-webkit-text-stroke:0.2px currentColor;color:#6c6e79;">12.5K</div>
<div class="t" style="left:856.09px;top:989.74px;font-size:14px;line-height:14px;font-weight:400;-webkit-text-stroke:0.2px currentColor;color:#6c6e79;">11.8K</div>
<div class="t" style="left:869.70px;top:1010.14px;font-size:14px;line-height:14px;font-weight:400;-webkit-text-stroke:0.2px currentColor;color:#6c6e79;transform:scaleX(1.0555);transform-origin:0 0;">Apr 2024</div>
<div class="t" style="left:1022.50px;top:1010.14px;font-size:14px;line-height:14px;font-weight:400;-webkit-text-stroke:0.2px currentColor;color:#6c6e79;transform:scaleX(1.0636);transform-origin:0 0;">Jun 2024</div>
<div class="t" style="left:1174.40px;top:1010.14px;font-size:14px;line-height:14px;font-weight:400;-webkit-text-stroke:0.2px currentColor;color:#6c6e79;transform:scaleX(1.0539);transform-origin:0 0;">Sep 2024</div>
<div class="t" style="left:1326.22px;top:1010.14px;font-size:14px;line-height:14px;font-weight:400;-webkit-text-stroke:0.2px currentColor;color:#6c6e79;transform:scaleX(1.0804);transform-origin:0 0;">Dec 2024</div>
<div class="t" style="left:1479.92px;top:1010.14px;font-size:14px;line-height:14px;font-weight:400;-webkit-text-stroke:0.2px currentColor;color:#6c6e79;transform:scaleX(1.0795);transform-origin:0 0;">Mar 2025</div>
<div class="t" style="left:1445.02px;top:796.00px;font-size:17px;line-height:17px;font-weight:400;-webkit-text-stroke:0.2px currentColor;color:#191b23;transform:scaleX(0.9766);transform-origin:0 0;">1Y</div>
<div class="t" style="left:1484.70px;top:796.00px;font-size:17px;line-height:17px;font-weight:400;-webkit-text-stroke:0.2px currentColor;color:#191b23;transform:scaleX(1.0214);transform-origin:0 0;">All Time</div>
<div class="t" style="left:1101.00px;top:653.75px;font-size:16px;line-height:16px;font-weight:600;color:#ffffff;transform:scaleX(1.0151);transform-origin:0 0;">View full report</div>
</body></html>
